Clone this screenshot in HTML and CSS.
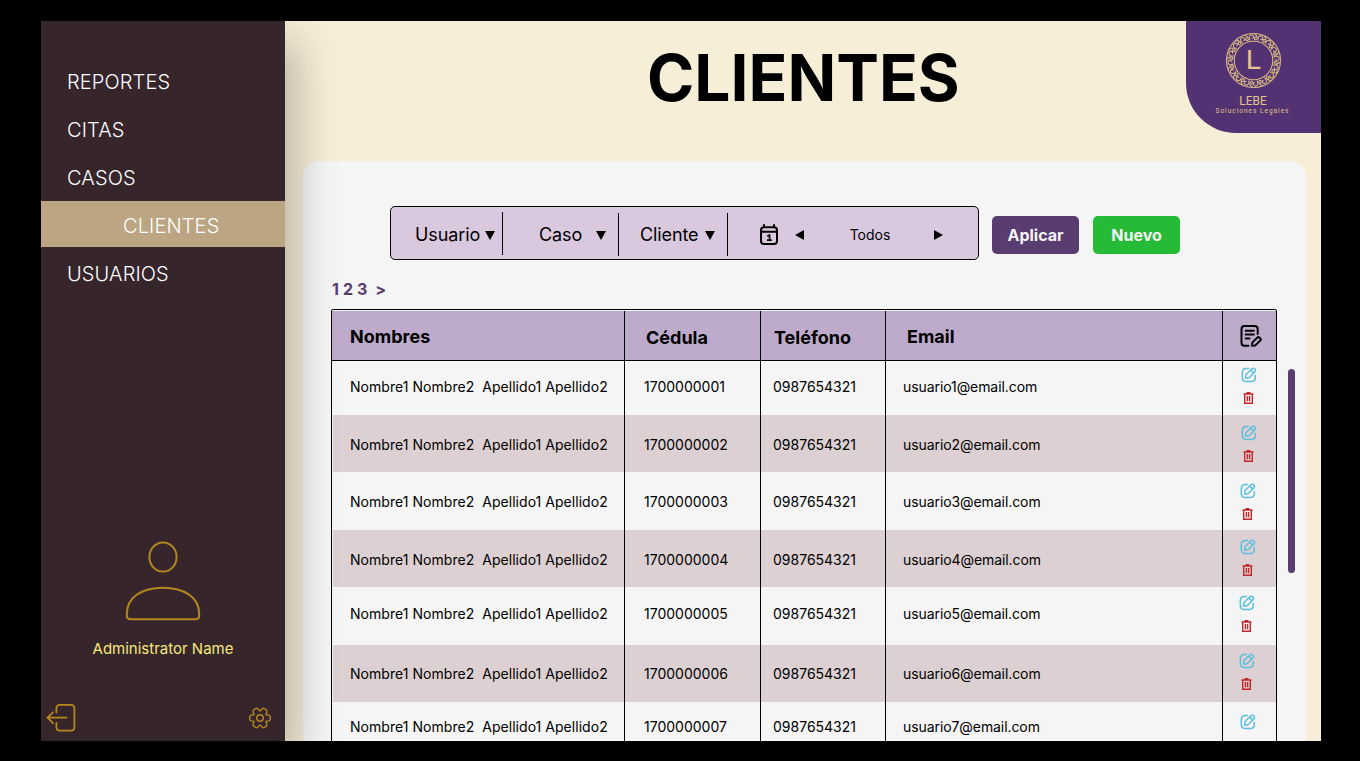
FILE: index.html
```html
<!DOCTYPE html>
<html lang="es">
<head>
<meta charset="utf-8">
<title>Clientes</title>
<link rel="stylesheet" href="styles.css">
</head>
<body>
<svg class="defs" aria-hidden="true">
  <symbol id="edit" viewBox="0 0 16 16">
    <path d="M7.500 1.600H5.600Q1.300 1.600 1.300 5.800V10.200Q1.300 14.600 5.600 14.600H10Q14.300 14.600 14.300 10.200V8.500"/>
    <path d="M10.900 1.700 5.400 7.200Q4.900 7.700 4.800 8.600L4.600 11.100 7.100 10.900Q8 10.800 8.600 10.200L14 4.800Q15.100 3.400 13.900 2.100 12.500 .6 10.900 1.700ZM10 2.800Q10.700 5.100 13 5.800"/>
  </symbol>
  <symbol id="trash" viewBox="0 0 11 12">
    <path d="M.5 2H10.500M3.500 .8H7.500M1.700 2V11.300H9.300V2M4.400 4V9.300M6.600 4V9.300"/>
  </symbol>
</svg>
<div class="app">
  <aside class="sidebar">
    <nav class="menu">
      <a>REPORTES</a>
      <a>CITAS</a>
      <a>CASOS</a>
      <a class="active">CLIENTES</a>
      <a>USUARIOS</a>
    </nav>
    <div class="profile">
      <svg class="avatar" viewBox="0 0 78 82">
        <ellipse cx="39" cy="17" rx="13.6" ry="14.6"/>
        <path d="M2.8 75.500V74C2.800 57 18 47.700 39 47.700S75.200 57 75.200 74V75.500Q75.200 79.200 71.500 79.200H6.500Q2.800 79.200 2.800 75.500Z"/>
      </svg>
      <div class="name">Administrator Name</div>
    </div>
    <div class="tools">
      <svg class="logout" viewBox="0 0 30 30">
        <path d="M10.400 10.500V6.500Q10.400 2.900 14 2.900H24.800Q28.400 2.900 28.400 6.500V25Q28.400 28.600 24.800 28.600H14Q10.400 28.600 10.400 25V21M1.500 15.700H20.500M7 10.300 1.500 15.700 7 21.100"/>
      </svg>
      <svg class="gear" viewBox="-12 -12 24 24">
        <path id="tooth" d="M6.200-3.600Q7-2.900 8.600-2.900 10.300-2.600 10.300-1V1Q10.300 2.600 8.600 2.900 7 2.900 6.200 3.600"/>
        <use href="#tooth" transform="rotate(60)"/>
        <use href="#tooth" transform="rotate(120)"/>
        <use href="#tooth" transform="rotate(180)"/>
        <use href="#tooth" transform="rotate(240)"/>
        <use href="#tooth" transform="rotate(300)"/>
        <circle r="3.300"/>
      </svg>
    </div>
  </aside>

  <main class="main">
    <header class="header">
      <h1>CLIENTES</h1>
      <div class="brand">
        <svg class="seal" viewBox="-29.500 -29.500 58 58">
          <circle r="27"/>
          <circle r="19.300"/>
          <g id="quarter">
            <g id="scroll">
              <path d="M20.500-3.500C23-5.500 26-3.800 25.500-1.500S22 .6 22.300-1.300M26.500 1.200C25 4.500 21 4 20.800 2.200S23.300 .6 23.600 2.400"/>
            </g>
            <use href="#scroll" transform="rotate(22.500)"/>
            <use href="#scroll" transform="rotate(45)"/>
            <use href="#scroll" transform="rotate(67.500)"/>
          </g>
          <use href="#quarter" transform="rotate(90)"/>
          <use href="#quarter" transform="rotate(180)"/>
          <use href="#quarter" transform="rotate(270)"/>
          <text x="0" y="8" text-anchor="middle">L</text>
        </svg>
        <div class="brand-name">LEBE</div>
        <div class="brand-sub">Soluciones Legales</div>
      </div>
    </header>

    <section class="panel">
      <div class="toolbar">
        <div class="filters">
          <div class="filter usuario"><span>Usuario</span><svg class="down" viewBox="0 0 10 9"><path d="M0 0H10L5 9Z"/></svg></div>
          <div class="filter caso"><span>Caso</span><svg class="down" viewBox="0 0 10 9"><path d="M0 0H10L5 9Z"/></svg></div>
          <div class="filter cliente"><span>Cliente</span><svg class="down" viewBox="0 0 10 9"><path d="M0 0H10L5 9Z"/></svg></div>
          <div class="dates">
            <svg class="calendar" viewBox="0 0 20 22">
              <path d="M5 3.200H15Q18 3.200 18 6.200V17Q18 20 15 20H5Q2 20 2 17V6.200Q2 3.200 5 3.200ZM2 7.700H18M5 1V3M15 1V3"/>
              <path class="one" d="M8.300 12.200 10.600 11V16M8 16.200H12.800"/>
            </svg>
            <svg class="arrow" viewBox="0 0 9 10"><path d="M9 0V10L0 5Z"/></svg>
            <span class="period">Todos</span>
            <svg class="arrow" viewBox="0 0 9 10"><path d="M0 0V10L9 5Z"/></svg>
          </div>
        </div>
        <button class="btn apply">Aplicar</button>
        <button class="btn new">Nuevo</button>
      </div>
      <div class="pages"><span>1</span><span>2</span><span>3</span><span class="next">&gt;</span></div>

      <div class="list">
        <div class="table">
          <div class="thead">
            <div>Nombres</div><div>Cédula</div><div>Teléfono</div><div>Email</div>
            <div class="head-icon">
              <svg viewBox="0 0 24 24">
                <path d="M9.500 21.700H5.500Q2.500 21.700 2.500 18.700V5Q2.500 2 5.500 2H15.500Q18.700 2 18.700 5V10M6.700 6.800H14.800M6.700 10.600H14.800M6.700 14.500H10.500"/>
                <path d="M13 21.700 13.400 18.400 18.700 13.300Q19.500 12.700 20.300 13.400L21.600 14.700Q22.300 15.500 21.600 16.300L16.300 21.400Z"/>
              </svg>
            </div>
          </div>
          <div class="row r1"><div>Nombre1 Nombre2&nbsp; Apellido1 Apellido2</div><div>1700000001</div><div>0987654321</div><div>usuario1@email.com</div><div class="actions"><svg class="edit"><use href="#edit"/></svg><svg class="trash"><use href="#trash"/></svg></div></div>
          <div class="row r2"><div>Nombre1 Nombre2&nbsp; Apellido1 Apellido2</div><div>1700000002</div><div>0987654321</div><div>usuario2@email.com</div><div class="actions"><svg class="edit"><use href="#edit"/></svg><svg class="trash"><use href="#trash"/></svg></div></div>
          <div class="row r3"><div>Nombre1 Nombre2&nbsp; Apellido1 Apellido2</div><div>1700000003</div><div>0987654321</div><div>usuario3@email.com</div><div class="actions"><svg class="edit"><use href="#edit"/></svg><svg class="trash"><use href="#trash"/></svg></div></div>
          <div class="row r4"><div>Nombre1 Nombre2&nbsp; Apellido1 Apellido2</div><div>1700000004</div><div>0987654321</div><div>usuario4@email.com</div><div class="actions"><svg class="edit"><use href="#edit"/></svg><svg class="trash"><use href="#trash"/></svg></div></div>
          <div class="row r5"><div>Nombre1 Nombre2&nbsp; Apellido1 Apellido2</div><div>1700000005</div><div>0987654321</div><div>usuario5@email.com</div><div class="actions"><svg class="edit"><use href="#edit"/></svg><svg class="trash"><use href="#trash"/></svg></div></div>
          <div class="row r6"><div>Nombre1 Nombre2&nbsp; Apellido1 Apellido2</div><div>1700000006</div><div>0987654321</div><div>usuario6@email.com</div><div class="actions"><svg class="edit"><use href="#edit"/></svg><svg class="trash"><use href="#trash"/></svg></div></div>
          <div class="row r7"><div>Nombre1 Nombre2&nbsp; Apellido1 Apellido2</div><div>1700000007</div><div>0987654321</div><div>usuario7@email.com</div><div class="actions"><svg class="edit"><use href="#edit"/></svg></div></div>
        </div>
        <div class="scrollbar"></div>
      </div>
    </section>
  </main>
</div>
</body>
</html>
```
FILE: styles.css
```css
* { box-sizing: border-box; }
body {
  margin: 0;
  height: 761px;
  padding: 21px 39px 20px 41px;
  background: #000;
  font-family: Inter, "Liberation Sans", sans-serif;
  overflow: hidden;
}
svg { display: block; flex: none; fill: none; stroke-linecap: round; stroke-linejoin: round; }
.defs { width: 0; height: 0; position: absolute; }
.app { display: flex; width: 1280px; height: 720px; overflow: hidden; background: #f7eed7; }

/* Sidebar */
.sidebar {
  position: relative;
  z-index: 1;
  flex: none;
  width: 244px;
  display: flex;
  flex-direction: column;
  background: #36252b;
  box-shadow: 11px 20px 40px rgba(0, 0, 0, .25);
}
.menu { display: flex; flex-direction: column; gap: 2px; padding-top: 36px; }
.menu a { height: 46px; padding: 4px 0 0 26px; line-height: 42px; font-size: 20px; font-weight: 300; letter-spacing: .12px; color: #fff; }
.menu .active { padding-left: 82px; background: #bba582; }
.profile { margin-top: 245px; display: flex; flex-direction: column; align-items: center; }
.avatar { width: 78px; height: 82px; stroke: #b3881f; stroke-width: 2; }
.name { margin-top: 17px; font-size: 15px; line-height: 20px; color: #f5e97a; }
.tools { display: flex; justify-content: space-between; align-items: center; margin-top: 43px; padding: 0 13px 0 5px; }
.tools svg { stroke: #b3881f; }
.logout { width: 30px; height: 30px; stroke-width: 1.8; }
.gear { width: 24px; height: 24px; stroke-width: 1.4; margin-top: 2px; }

/* Header */
.main { flex: 1; display: flex; flex-direction: column; min-width: 0; }
.header { display: flex; justify-content: flex-end; height: 140px; }
h1 { margin: 0; width: 539px; padding-top: 18px; font-size: 64px; line-height: 77px; font-weight: 700; color: #000; }
.brand {
  width: 135px;
  height: 112px;
  padding: 10px 1px 0 0;
  display: flex;
  flex-direction: column;
  align-items: center;
  background: #533273;
  border-radius: 0 0 0 50px;
  color: #e4c48c;
}
.seal { width: 58px; height: 58px; stroke: #d9b981; stroke-width: 1.1; }
.seal text { fill: #e4c48c; stroke: #e4c48c; stroke-width: .2; font: 400 27px "Liberation Sans", sans-serif; }
.brand-name { margin-top: 5px; font: 400 12px/14px Roboto, sans-serif; }
.brand-sub { font: 400 6.500px/7px Roboto, sans-serif; letter-spacing: 1px; margin-right: 1px; white-space: nowrap; }

/* Panel */
.panel { flex: 1; margin: 0 15px 0 18px; padding: 45px 0 0 28px; background: #f5f5f5; border-radius: 16px 16px 0 0; }
.toolbar { display: flex; align-items: center; height: 54px; margin-left: 59px; }
.filters {
  display: flex;
  align-items: center;
  width: 589px;
  height: 54px;
  background: #dac8de;
  border: 1px solid #000;
  border-radius: 5px;
}
.filter { display: flex; align-items: center; justify-content: space-between; height: 43px; margin-top: 2px; border-right: 1px solid #000; font-size: 18px; line-height: 22px; }
.usuario { width: 112px; padding: 2px 7px 0 24px; margin-top: 0; }
.caso { width: 116px; padding: 0 12px 0 36px; }
.cliente { width: 109px; padding: 0 12px 0 21px; }
.down { width: 10px; height: 9px; fill: #000; margin-top: 3px; }
.filter span { padding-top: 2px; letter-spacing: -.1px; }
.dates { flex: 1; display: flex; align-items: center; padding: 3px 35px 0 31px; }
.calendar { width: 20px; height: 22px; stroke: #000; stroke-width: 2; }
.calendar .one { stroke-width: 1.7; stroke-linecap: butt; }
.arrow { width: 9px; height: 10px; fill: #000; margin-top: 1px; }
.calendar + .arrow { margin-left: 16px; }
.period { flex: 1; text-align: center; font-size: 14px; line-height: 18px; margin-left: 2px; }
.btn { width: 87px; height: 38px; padding: 0 0 1px; border: 0; border-radius: 5px; font: 700 16px Inter, sans-serif; color: #f4f4f4; margin-top: 4px; }
.apply { margin-left: 13px; background: #593c70; }
.new { margin-left: 14px; background: #25bb37; }
.pages { display: flex; gap: 4px; height: 20px; margin: 19px 0 10px 1px; line-height: 20px; font-size: 16px; font-weight: 700; color: #593c70; }
.next { margin-left: 4px; }

/* Table */
.list { display: flex; align-items: flex-start; height: 432px; overflow: hidden; }
.table { width: 946px; height: 500px; border: 1px solid #000; border-radius: 2px 2px 0 0; }
.thead, .row { display: grid; grid-template-columns: 292px 136px 125px 337px 53px; padding-left: 1px; background-clip: content-box; }
.thead > div, .row > div { border-right: 1px solid #000; }
.thead > div:last-child, .row > div:last-child { border-right: 0; }
.thead { height: 51px; padding: 1px 0 0; grid-template-columns: 293px 136px 125px 337px 53px; background-color: #beabcc; border-bottom: 1px solid #000; font-size: 18px; font-weight: 700; line-height: 22px; }
.thead > div { padding: 15px 0 0 21px; }
.thead > div:nth-child(1) { padding-left: 18px; }
.thead > div:nth-child(2) { padding-top: 16px; }
.thead > div:nth-child(3) { padding: 16px 0 0 13px; }
.thead > .head-icon { padding: 13px 0 0 15.500px; }
.head-icon svg { width: 24px; height: 24px; stroke: #000; stroke-width: 2; }
.row { height: 57px; font-size: 14px; line-height: 20px; color: #000; }
.row > div { padding: var(--text) 0 0 17px; }
.row > div:nth-child(1) { letter-spacing: .04px; }
.row > div:nth-child(2) { padding-left: 19px; }
.row > div:nth-child(3) { padding-left: 12px; }
.row > div:nth-child(4) { letter-spacing: -.08px; }
.row > .actions { padding: var(--icon) 0 0 var(--left); }
.edit { width: 16px; height: 16px; stroke: #5bbfdd; stroke-width: 1.5; }
.trash { width: 11px; height: 12px; margin: 9px 0 0 2px; stroke: #c1272d; stroke-width: 1.4; stroke-linecap: butt; stroke-linejoin: miter; }
.r2, .r4, .r6 { background-color: #dcd0d2; }
.r1 { height: 54px; --text: 16px; --icon: 6px; --left: 17.500px; }
.r2 { --text: 20px; --icon: 10px; --left: 17.500px; }
.r3 { height: 58px; --text: 20px; --icon: 11px; --left: 16.500px; }
.r4 { --text: 20px; --icon: 9px; --left: 16.500px; }
.r5 { height: 58px; --text: 17px; --icon: 8px; --left: 15.500px; }
.r6 { --text: 19px; --icon: 8px; --left: 15.500px; }
.r7 { --text: 15px; --icon: 12px; --left: 16.500px; }
.scrollbar { width: 7px; height: 204px; margin: 60px 0 0 11px; border-radius: 4px; background: #593c70; }
```
